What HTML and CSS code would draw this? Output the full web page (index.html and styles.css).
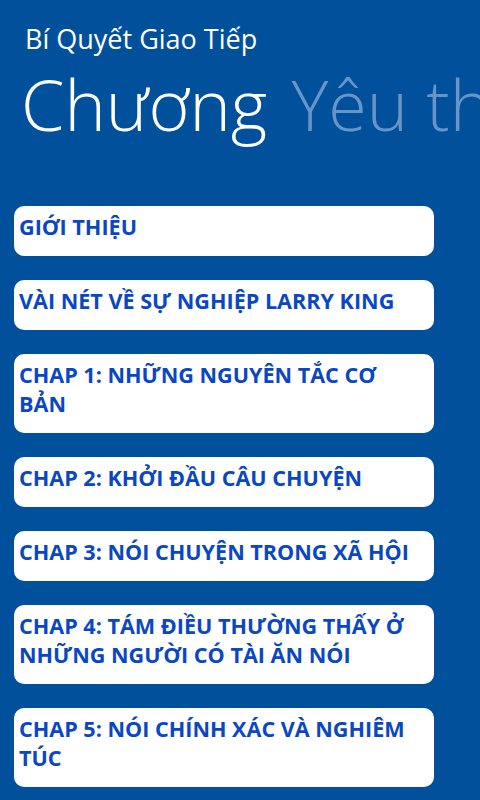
FILE: index.html
```html
<!DOCTYPE html>
<html lang="vi">
<head>
<meta charset="utf-8">
<link rel="stylesheet" href="styles.css">
</head>
<body>
<div class="app">
  <header class="header">
    <div class="app-title">Bí Quyết Giao Tiếp</div>
    <div class="pivot">
      <span class="pivot-item active">Chương</span>
      <span class="pivot-item">Yêu thích</span>
    </div>
  </header>
  <ul class="list">
    <li class="card">GIỚI THIỆU</li>
    <li class="card">VÀI NÉT VỀ SỰ NGHIỆP LARRY KING</li>
    <li class="card">CHAP 1: NHỮNG NGUYÊN TẮC CƠ BẢN</li>
    <li class="card">CHAP 2: KHỞI ĐẦU CÂU CHUYỆN</li>
    <li class="card">CHAP 3: NÓI CHUYỆN TRONG XÃ HỘI</li>
    <li class="card">CHAP 4: TÁM ĐIỀU THƯỜNG THẤY Ở NHỮNG NGƯỜI CÓ TÀI ĂN NÓI</li>
    <li class="card">CHAP 5: NÓI CHÍNH XÁC VÀ NGHIÊM TÚC</li>
  </ul>
</div>
</body>
</html>
```
FILE: styles.css
```css
html, body {
  margin: 0;
  padding: 0;
  background: #00509c;
  height: 100%;
  overflow: hidden;
}
.app {
  width: 480px;
  height: 800px;
  overflow: hidden;
  font-family: "Open Sans", "Noto Sans", sans-serif;
}
.header {
  padding-top: 22px;
}
.app-title {
  color: #ffffff;
  font-size: 27px;
  font-weight: 400;
  line-height: 34px;
  padding-left: 25px;
}
.pivot {
  white-space: nowrap;
  overflow: hidden;
  padding-left: 21px;
  margin-top: 4px;
}
.pivot-item {
  font-size: 70px;
  font-weight: 300;
  line-height: 88px;
  color: #ffffff;
  margin-right: 20px;
}
.pivot-item:not(.active) {
  color: #6795c8;
}
.list {
  list-style: none;
  margin: 58px 0 0 0;
  padding: 0 0 0 14px;
  display: flex;
  flex-direction: column;
  gap: 24px;
}
.card {
  width: 420px;
  box-sizing: border-box;
  background: #ffffff;
  border-radius: 10px;
  padding: 6px 20px 15px 5px;
  color: #0a47c2;
  font-weight: 700;
  font-size: 21.6px;
  line-height: 29px;
}
```
